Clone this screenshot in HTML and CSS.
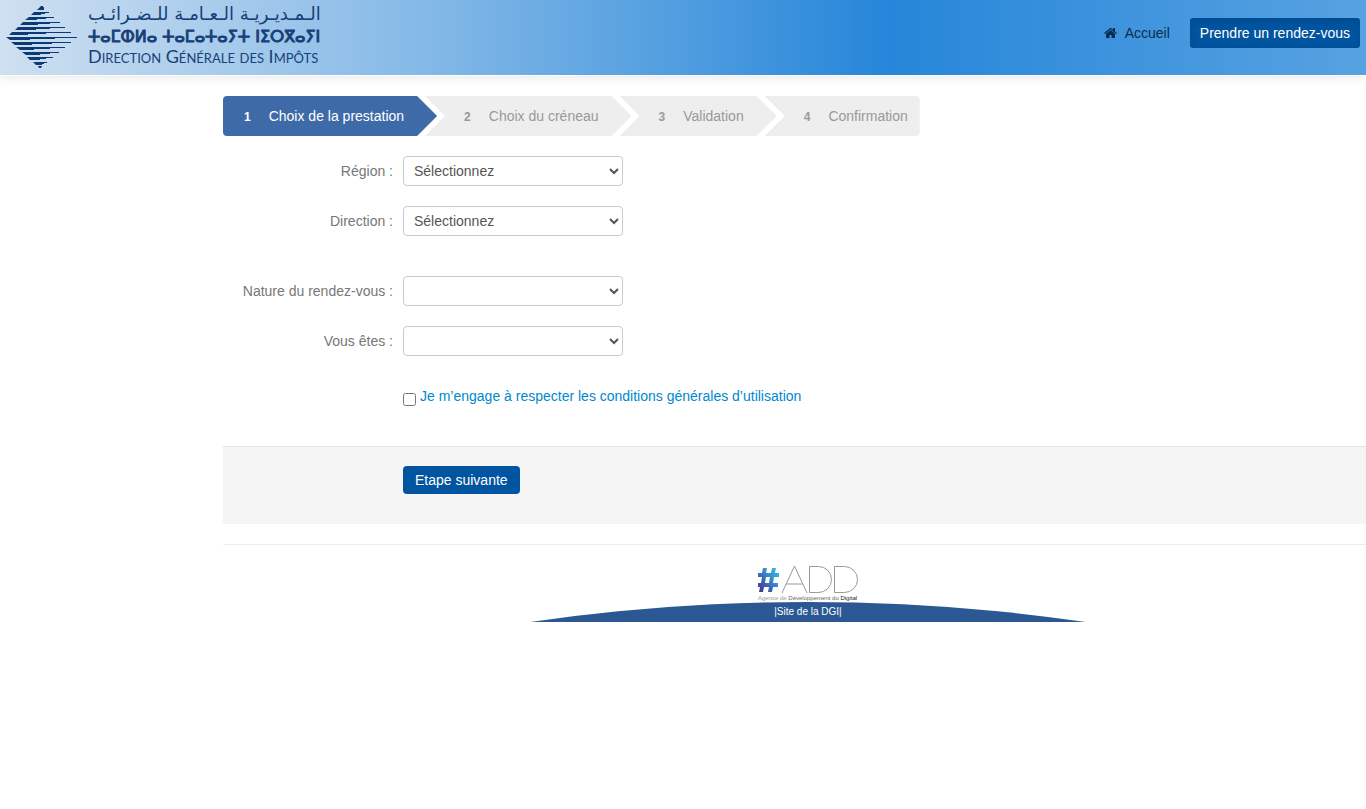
FILE: index.html
```html
<!DOCTYPE html>
<html lang="fr">
<head>
    <meta charset="UTF-8">
    <meta name="viewport" content="width=device-width, initial-scale=1.0">
    <title>Prendre un rendez-vous</title>
    <link rel="stylesheet" href="styles.css">
</head>
<body>
    <header class="navbar">
        <a class="brand" href="#">
            <svg class="brand-mark" viewBox="0 0 72 64" aria-hidden="true">
                <path d="M35 0h2v1h1v3h-7l1-1z"/>
                <path d="M28 6h15v1h-4v1h-4v1h-10z"/>
                <path d="M23 11h25v1h-8v1h-9v1h-12z"/>
                <path d="M17 16h37v1h-10v1h-12v1h-18z"/>
                <path d="M12 21h47v1h-15v1h-14v1h-21z"/>
                <path d="M6 26h59v1h-25v1h-18v1h-19z"/>
                <path d="M0 31h71v1h-22v1h-25v1h-20z"/>
                <path d="M5 36h60v1h-19v1h-20v1h-17z"/>
                <path d="M10 41h49v1h-15v1h-16v1h-14z"/>
                <path d="M16 46h37v1h-9v1h-10v1h-14z"/>
                <path d="M21 51h26v1h-7v1h-6v1h-10z"/>
                <path d="M27 56h14v1h-3v1h-2v1h-6z"/>
                <path d="M32 60h4l-1 2h-2z"/>
            </svg>
            <span class="brand-text">
                <span class="brand-ar" lang="ar" dir="rtl">الـمـديـريـة الـعـامـة للـضـرائـب</span>
                <span class="brand-tz" lang="zgh">ⵜⴰⵎⵀⵍⴰ ⵜⴰⵎⴰⵜⴰⵢⵜ ⵏⵉⵔⴳⴰⵢⵏ</span>
                <span class="brand-fr">Direction Générale des Impôts</span>
            </span>
        </a>
        <nav class="menu">
            <a class="menu-link" href="#">
                <svg class="icon-home" viewBox="64 256 1664 1280" aria-hidden="true">
                    <path d="M1472 992v480q0 26-19 45t-45 19h-384v-384h-256v384h-384q-26 0-45-19t-19-45v-480q0-1 .5-3t.5-3l575-474 575 474q1 2 1 6zm223-69l-62 74q-8 9-21 11h-3q-13 0-21-7l-692-577-692 577q-12 8-24 7-13-2-21-11l-62-74q-8-10-7-23.5t11-21.5l719-599q32-26 76-26t76 26l244 204v-195q0-14 9-23t23-9h192q14 0 23 9t9 23v408l219 182q10 8 11 21.5t-7 23.5z"/>
                </svg>
                Accueil
            </a>
            <a class="menu-link active" href="#">Prendre un rendez-vous</a>
        </nav>
    </header>

    <main class="container">
        <ol class="steps">
            <li class="step active"><span class="step-number">1</span>Choix de la prestation</li>
            <li class="step"><span class="step-number">2</span>Choix du créneau</li>
            <li class="step"><span class="step-number">3</span>Validation</li>
            <li class="step"><span class="step-number">4</span>Confirmation</li>
        </ol>

        <form>
            <div class="control-group">
                <label for="region">Région :</label>
                <select id="region"><option>Sélectionnez</option></select>
            </div>
            <div class="control-group">
                <label for="direction">Direction :</label>
                <select id="direction"><option>Sélectionnez</option></select>
            </div>
            <div class="control-group spaced">
                <label for="nature">Nature du rendez-vous :</label>
                <select id="nature"><option></option></select>
            </div>
            <div class="control-group">
                <label for="profil">Vous êtes :</label>
                <select id="profil"><option></option></select>
            </div>
            <div class="conditions">
                <input type="checkbox" id="conditions" aria-labelledby="conditions-link">
                <a href="#" id="conditions-link">Je m’engage à respecter les conditions générales d’utilisation</a>
            </div>
            <div class="form-actions">
                <button type="submit">Etape suivante</button>
            </div>
        </form>

        <footer>
            <svg class="add-logo" viewBox="0 0 102 37" role="img" aria-label="ADD">
                <defs>
                    <linearGradient id="hash" x1="0" y1="1" x2="1" y2="0">
                        <stop offset="0" stop-color="#4a2a8c"/>
                        <stop offset="0.5" stop-color="#3a7cc4"/>
                        <stop offset="1" stop-color="#35c5ee"/>
                    </linearGradient>
                </defs>
                <path fill="url(#hash)" d="M6 3h4l-1 5h5l1-5h4l-1 5h4v4h-5l-1 6h5v4h-5l-1 5h-4l1-5h-5l-1 5h-4l1-5h-2v-4h3l1-6h-4v-4h4zM9 12l-1 6h4l1-6z"/>
                <g fill="none" stroke="#999" stroke-width="1">
                    <path d="M25 28L37.500 1L50 28M29 19h17"/>
                    <path d="M52.500 1.500v26h9a13 13 0 0 0 0-26z"/>
                    <path d="M77.500 1.500v26h10a13 13 0 0 0 0-26z"/>
                </g>
                <text class="add-caption" x="1" y="35">Agence de <tspan class="mid">Développement du</tspan> <tspan class="dark">Digital</tspan></text>
            </svg>
            <div class="footer-band"><a href="#">|Site de la DGI|</a></div>
        </footer>
    </main>
</body>
</html>
```
FILE: styles.css
```css
body {
    margin: 0;
    font-family: "Liberation Sans", Arial, sans-serif;
    font-size: 14px;
    line-height: 20px;
    color: #777;
    background-color: #fff;
}

a {
    color: #0088cc;
    text-decoration: none;
}

/* Top bar */
.navbar {
    display: flex;
    justify-content: space-between;
    align-items: flex-start;
    height: 75px;
    padding: 0 6px;
    border-bottom: 1px solid #fff;
    background: linear-gradient(to right, #cfe0f1 0%, #84b9e7 31%, #2686d9 65%, #57a2e1 100%) padding-box;
    box-shadow: 0 1px 10px rgba(0, 0, 0, 0.1);
}

.brand {
    display: flex;
    gap: 10px;
    color: #173f78;
}

.brand-mark {
    width: 72px;
    height: 64px;
    margin-top: 6px;
    fill: #0b3a75;
}

.brand-text {
    display: flex;
    flex-direction: column;
    align-items: flex-start;
    white-space: nowrap;
}

.brand-ar {
    font-family: "DejaVu Sans", sans-serif;
    font-size: 18px;
    line-height: 27px;
}

.brand-tz {
    font-family: "DejaVu Sans", sans-serif;
    font-size: 16px;
    line-height: 20px;
    -webkit-text-stroke: 1px #173f78;
}

.brand-fr {
    font-family: Lato, sans-serif;
    font-size: 18px;
    font-variant: small-caps;
    line-height: 18px;
}

.menu {
    display: flex;
    gap: 10px;
    padding-top: 18px;
}

.menu-link {
    display: flex;
    align-items: center;
    gap: 8px;
    padding: 5px 10px;
    color: #0b2c4c;
}

.menu-link.active {
    color: #fff;
    background-color: #0054a0;
    border-radius: 3px;
    box-shadow: inset 0 3px 8px rgba(0, 0, 0, 0.125);
}

.icon-home {
    width: 13px;
    height: 10px;
    fill: #0b2c4c;
}

/* Content */
.container {
    margin: 20px 0 0 223px;
}

.steps {
    display: flex;
    height: 40px;
    margin: 0 0 20px;
    padding: 0;
    list-style: none;
    line-height: 40px;
}

.step {
    padding: 0 33px 0 39px;
    margin-left: -12px;
    color: #999;
    background-color: #eee;
    clip-path: polygon(0 0, calc(100% - 20px) 0, 100% 50%, calc(100% - 20px) 100%, 0 100%, 20px 50%);
}

.step:first-child {
    margin-left: 0;
    padding-left: 21px;
    border-radius: 4px 0 0 4px;
    clip-path: polygon(0 0, calc(100% - 20px) 0, 100% 50%, calc(100% - 20px) 100%, 0 100%);
}

.step:last-child {
    padding-right: 12px;
    border-radius: 0 4px 4px 0;
    clip-path: polygon(0 0, 100% 0, 100% 100%, 0 100%, 20px 50%);
}

.step.active {
    color: #fff;
    background-color: #3e6ba8;
}

.step-number {
    display: inline-block;
    margin-right: 18px;
    font-size: 12px;
    font-weight: bold;
    line-height: 20px;
}

/* Form */
.control-group {
    display: flex;
    align-items: center;
    gap: 10px;
    margin-bottom: 20px;
}

.control-group.spaced {
    margin-top: 40px;
}

.control-group label {
    width: 170px;
    text-align: right;
}

select {
    box-sizing: border-box;
    width: 220px;
    height: 30px;
    padding: 4px 6px;
    border: 1px solid #ccc;
    border-radius: 4px;
    font: inherit;
    color: #555;
    background-color: #fff;
}

.conditions {
    display: flex;
    gap: 4px;
    padding: 10px 0 40px 180px;
}

.conditions input {
    width: 13px;
    height: 13px;
    margin: 7px 0 0;
}

.form-actions {
    padding: 19px 20px 30px 180px;
    border-top: 1px solid #e5e5e5;
    background-color: #f5f5f5;
}

button {
    display: block;
    height: 28px;
    padding: 0 12px;
    border: none;
    border-radius: 4px;
    font: inherit;
    color: #fff;
    background-color: #0054a0;
    cursor: pointer;
}

/* Footer */
footer {
    display: flex;
    flex-direction: column;
    align-items: center;
    margin-top: 20px;
    padding: 20px 0 0 27px;
    border-top: 1px solid #eee;
}

.add-logo {
    width: 102px;
    height: 37px;
}

.add-caption {
    font-size: 6px;
    fill: #999;
}

.add-caption .mid {
    fill: #666;
}

.add-caption .dark {
    fill: #222;
}

.footer-band {
    width: 555px;
    height: 20px;
    text-align: center;
    font-size: 10px;
    background-color: #2b5892;
    clip-path: circle(1938px at 50% 1938px);
}

.footer-band a {
    color: #fff;
}
```
